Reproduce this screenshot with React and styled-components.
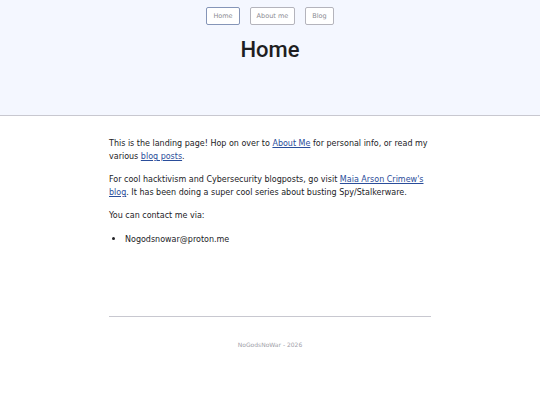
import styled, { createGlobalStyle } from 'styled-components'

const Global = createGlobalStyle`
  html, body {
    margin: 0;
    padding: 0;
    background: #ffffff;
    font-family: "DejaVu Sans", "Liberation Sans", sans-serif;
    color: #222226;
  }
`

const Header = styled.header`
  background: #f4f7ff;
  border-bottom: 1px solid #c8c8d0;
  height: 115px;
  display: flex;
  flex-direction: column;
  align-items: center;
`

const Nav = styled.nav`
  display: flex;
  gap: 10px;
  margin-top: 7px;
`

const NavButton = styled.a`
  font-size: 6.5px;
  color: #8a8a92;
  background: #ffffff;
  border: 1px solid ${p => (p.$active ? '#8595b8' : '#b4b4bc')};
  border-radius: 2px;
  padding: 4px 6px;
  text-decoration: none;
`

const Title = styled.h1`
  font-family: Roboto, "Liberation Sans", sans-serif;
  font-weight: 500;
  font-size: 22px;
  margin: 12px 0 0;
  color: #1e1e22;
`

const Main = styled.main`
  width: 322px;
  margin: 0 auto;
  padding-top: 21px;
  font-size: 8px;
  line-height: 13px;
`

const P = styled.p`
  margin: 0 0 10px;
`

const A = styled.a`
  color: #2a4d9a;
  text-decoration: underline;
`

const List = styled.ul`
  margin: 0;
  padding-left: 16px;

  li::marker {
    font-size: 10px;
  }
`

const Footer = styled.footer`
  width: 322px;
  margin: 70px auto 0;
  border-top: 1px solid #c8c8d0;
  text-align: center;
  padding-top: 24px;
  font-size: 6px;
  color: #a0a0a8;
`

export default function App() {
  return (
    <>
      <Global />
      <Header>
        <Nav>
          <NavButton $active href="#">Home</NavButton>
          <NavButton href="#">About me</NavButton>
          <NavButton href="#">Blog</NavButton>
        </Nav>
        <Title>Home</Title>
      </Header>
      <Main>
        <P>
          This is the landing page! Hop on over to <A href="#">About Me</A> for personal info, or read my
          various <A href="#">blog posts</A>.
        </P>
        <P>
          For cool hacktivism and Cybersecurity blogposts, go visit <A href="#">Maia Arson Crimew's blog</A>. It has been doing a super cool series about busting Spy/Stalkerware.
        </P>
        <P>You can contact me via:</P>
        <List>
          <li>Nogodsnowar@proton.me</li>
        </List>
      </Main>
      <Footer>NoGodsNoWar - 2026</Footer>
    </>
  )
}
